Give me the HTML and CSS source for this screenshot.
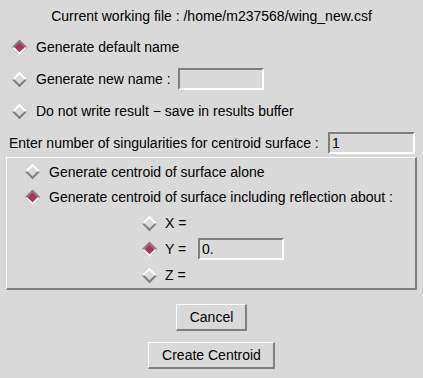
FILE: index.html
```html
<!DOCTYPE html>
<html lang="en">
<head>
    <meta charset="UTF-8">
    <meta name="viewport" content="width=device-width, initial-scale=1.0">
    <title>Create Centroid</title>
    <link rel="stylesheet" href="styles.css">
</head>
<body>
    <div class="dialog">
        <div class="title">Current working file : /home/m237568/wing_new.csf</div>

        <div class="row">
            <span class="radio"><span class="dot on"></span></span>
            <span>Generate default name</span>
        </div>
        <div class="row">
            <span class="radio"><span class="dot"></span></span>
            <span>Generate new name :</span>
            <input class="field name-field" type="text" value="">
        </div>
        <div class="row">
            <span class="radio"><span class="dot"></span></span>
            <span>Do not write result &minus; save in results buffer</span>
        </div>

        <div class="sing-row">
            <span>Enter number of singularities for centroid surface :</span>
            <input class="field sing-field" type="text" value="1">
        </div>

        <div class="frame">
            <div class="frow first">
                <span class="radio"><span class="dot"></span></span>
                <span>Generate centroid of surface alone</span>
            </div>
            <div class="frow">
                <span class="radio"><span class="dot on"></span></span>
                <span>Generate centroid of surface including reflection about :</span>
            </div>
            <div class="frow axis">
                <span class="radio"><span class="dot"></span></span>
                <span class="axis-label">X =</span>
            </div>
            <div class="frow axis">
                <span class="radio"><span class="dot on"></span></span>
                <span class="axis-label">Y =</span>
                <input class="field axis-field" type="text" value="0.">
            </div>
            <div class="frow axis">
                <span class="radio"><span class="dot"></span></span>
                <span class="axis-label">Z =</span>
            </div>
        </div>

        <div class="buttons">
            <button class="btn">Cancel</button>
            <button class="btn">Create Centroid</button>
        </div>
    </div>
</body>
</html>
```

FILE: styles.css
```css
body {
    margin: 0;
    padding: 0;
    background-color: #d9d9d9;
    font-family: "Liberation Sans", Arial, sans-serif;
    font-size: 14px;
    color: #000;
}
.dialog {
    width: 423px;
    height: 378px;
    overflow: hidden;
}
.title {
    height: 31px;
    display: flex;
    align-items: center;
    justify-content: center;
}
.row {
    height: 32px;
    display: flex;
    align-items: center;
    padding-left: 11px;
    gap: 9px;
}
.radio {
    width: 16px;
    height: 16px;
    display: flex;
    align-items: center;
    justify-content: center;
    flex-shrink: 0;
}
.dot {
    width: 11px;
    height: 11px;
    box-sizing: border-box;
    border: 2px solid;
    border-color: #fff #7f7f7f #7f7f7f #fff;
    background-color: #d9d9d9;
    transform: rotate(45deg);
}
.dot.on {
    border-color: #7f7f7f #fff #fff #7f7f7f;
    background-color: #b03060;
}
.field {
    box-sizing: border-box;
    height: 22px;
    border: 2px solid;
    border-color: #7f7f7f #fff #fff #7f7f7f;
    background-color: #d9d9d9;
    font-family: "Liberation Sans", Arial, sans-serif;
    font-size: 14px;
    padding: 0 2px;
    margin: 0;
    outline: none;
}
.name-field {
    width: 86px;
    margin-left: -2px;
}
.sing-row {
    box-sizing: border-box;
    height: 30px;
    padding: 2px 8px 0 9px;
    display: flex;
    align-items: center;
}
.sing-field {
    width: 87px;
    margin-left: auto;
}
.frame {
    box-sizing: border-box;
    margin: 0 6px;
    height: 133px;
    padding-top: 1px;
    border-top: 1px solid #fff;
    border-left: 1px solid #fff;
    border-right: 2px solid #7f7f7f;
    border-bottom: 2px solid #7f7f7f;
}
.frow {
    height: 26px;
    display: flex;
    align-items: center;
    padding-left: 17px;
    gap: 9px;
}
.frow.first {
    height: 25px;
}
.frow.axis {
    padding-left: 134px;
    gap: 8px;
}
.axis-label {
    width: 22px;
}
.axis-field {
    width: 86px;
    margin-left: 3px;
}
.buttons {
    margin-top: 14px;
    display: flex;
    flex-direction: column;
    align-items: center;
    gap: 11px;
}
.btn {
    box-sizing: border-box;
    height: 27px;
    padding: 0 12px 0 13px;
    border: 1px solid #fff;
    border-right: 2px solid #7f7f7f;
    border-bottom: 2px solid #7f7f7f;
    background-color: #d9d9d9;
    font-family: "Liberation Sans", Arial, sans-serif;
    font-size: 14px;
    color: #000;
}
```
